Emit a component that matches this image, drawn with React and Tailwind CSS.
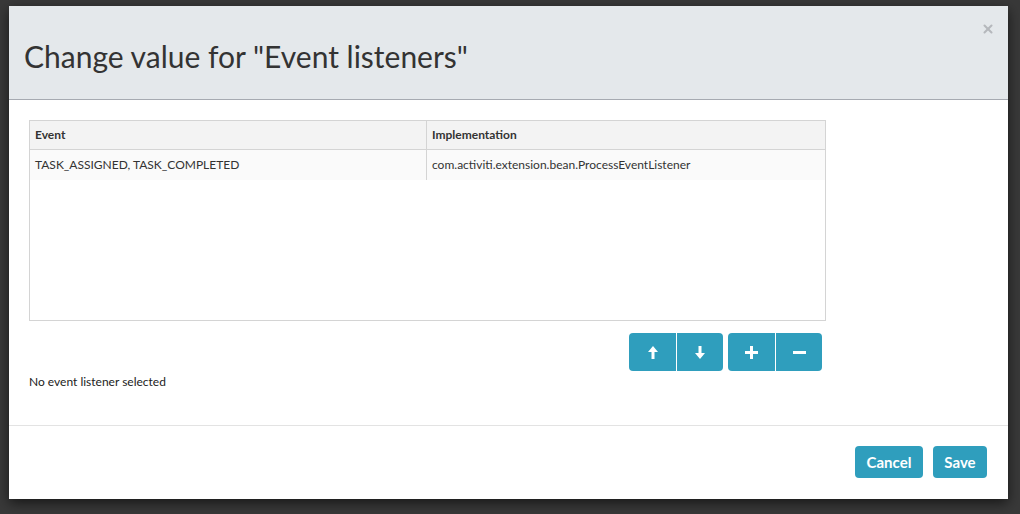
import { X } from "lucide-react";

function ArrowUp() {
  return (
    <svg width="10" height="13" viewBox="0 0 10 13" fill="white">
      <path d="M5 0 L10 6 L6.5 6 L6.5 13 L3.5 13 L3.5 6 L0 6 Z" />
    </svg>
  );
}

function ArrowDown() {
  return (
    <svg width="10" height="13" viewBox="0 0 10 13" fill="white">
      <path d="M5 13 L10 7 L6.5 7 L6.5 0 L3.5 0 L3.5 7 L0 7 Z" />
    </svg>
  );
}

function Plus() {
  return (
    <svg width="13" height="13" viewBox="0 0 13 13" fill="white">
      <path d="M5 0 H8 V5 H13 V8 H8 V13 H5 V8 H0 V5 H5 Z" />
    </svg>
  );
}

function Minus() {
  return (
    <svg width="13" height="13" viewBox="0 0 13 13" fill="white">
      <path d="M0 5 H13 V8 H0 Z" />
    </svg>
  );
}

export default function App() {
  const btn = "flex h-[38px] items-center justify-center bg-[#2f9ebd]";

  return (
    <div
      className="h-[514px] w-[1020px] overflow-hidden bg-[#393939] pl-[9px] pt-[6px]"
      style={{ fontFamily: "Lato, 'Open Sans', sans-serif" }}
    >
      <div className="flex h-[493px] w-[999px] flex-col bg-white shadow-[0_4px_12px_rgba(0,0,0,0.6)]">
        {/* header */}
        <div className="relative flex h-[94px] shrink-0 items-center border-b border-[#a6aab1] bg-[#e4e8eb] px-[15px]">
          <h1 className="pt-[6px] text-[30px] leading-none text-[#333]">
            Change value for "Event listeners"
          </h1>
          <X
            className="absolute right-[13px] top-[16px] h-[14px] w-[14px] text-[#b5b8bc]"
            strokeWidth={3.5}
          />
        </div>

        {/* body */}
        <div className="flex h-[325px] shrink-0 flex-col px-[20px] pt-[20px]">
          <div className="h-[201px] w-[797px] border border-[#d4d4d4] text-[12px] text-[#333]">
            <div className="flex h-[29px] border-b border-[#d4d4d4] bg-[#f3f3f3] font-bold">
              <div className="flex w-[397px] items-center border-r border-[#d4d4d4] px-[5px]">
                Event
              </div>
              <div className="flex flex-1 items-center px-[5px]">Implementation</div>
            </div>
            <div className="flex h-[30px] bg-[#fafafa]">
              <div className="flex w-[397px] items-center border-r border-[#d4d4d4] px-[5px]">
                TASK_ASSIGNED, TASK_COMPLETED
              </div>
              <div className="flex flex-1 items-center px-[5px]">
                com.activiti.extension.bean.ProcessEventListener
              </div>
            </div>
          </div>

          <div className="mt-[12px] flex w-[793px] justify-end gap-[5px]">
            <div className="flex gap-px">
              <div className={`${btn} w-[47px] rounded-l-[4px]`}>
                <ArrowUp />
              </div>
              <div className={`${btn} w-[46px] rounded-r-[4px]`}>
                <ArrowDown />
              </div>
            </div>
            <div className="flex gap-px">
              <div className={`${btn} w-[47px] rounded-l-[4px]`}>
                <Plus />
              </div>
              <div className={`${btn} w-[46px] rounded-r-[4px]`}>
                <Minus />
              </div>
            </div>
          </div>

          <p className="mt-[2px] text-[12px] text-[#222]">No event listener selected</p>
        </div>

        {/* footer */}
        <div className="flex flex-1 items-start justify-end gap-[10px] border-t border-[#e3e3e3] pr-[21px] pt-[20px]">
          <button className="h-[32px] w-[68px] rounded-[4px] bg-[#2f9ebd] text-[15px] font-bold text-white">
            Cancel
          </button>
          <button className="h-[32px] w-[54px] rounded-[4px] bg-[#2f9ebd] text-[15px] font-bold text-white">
            Save
          </button>
        </div>
      </div>
    </div>
  );
}
